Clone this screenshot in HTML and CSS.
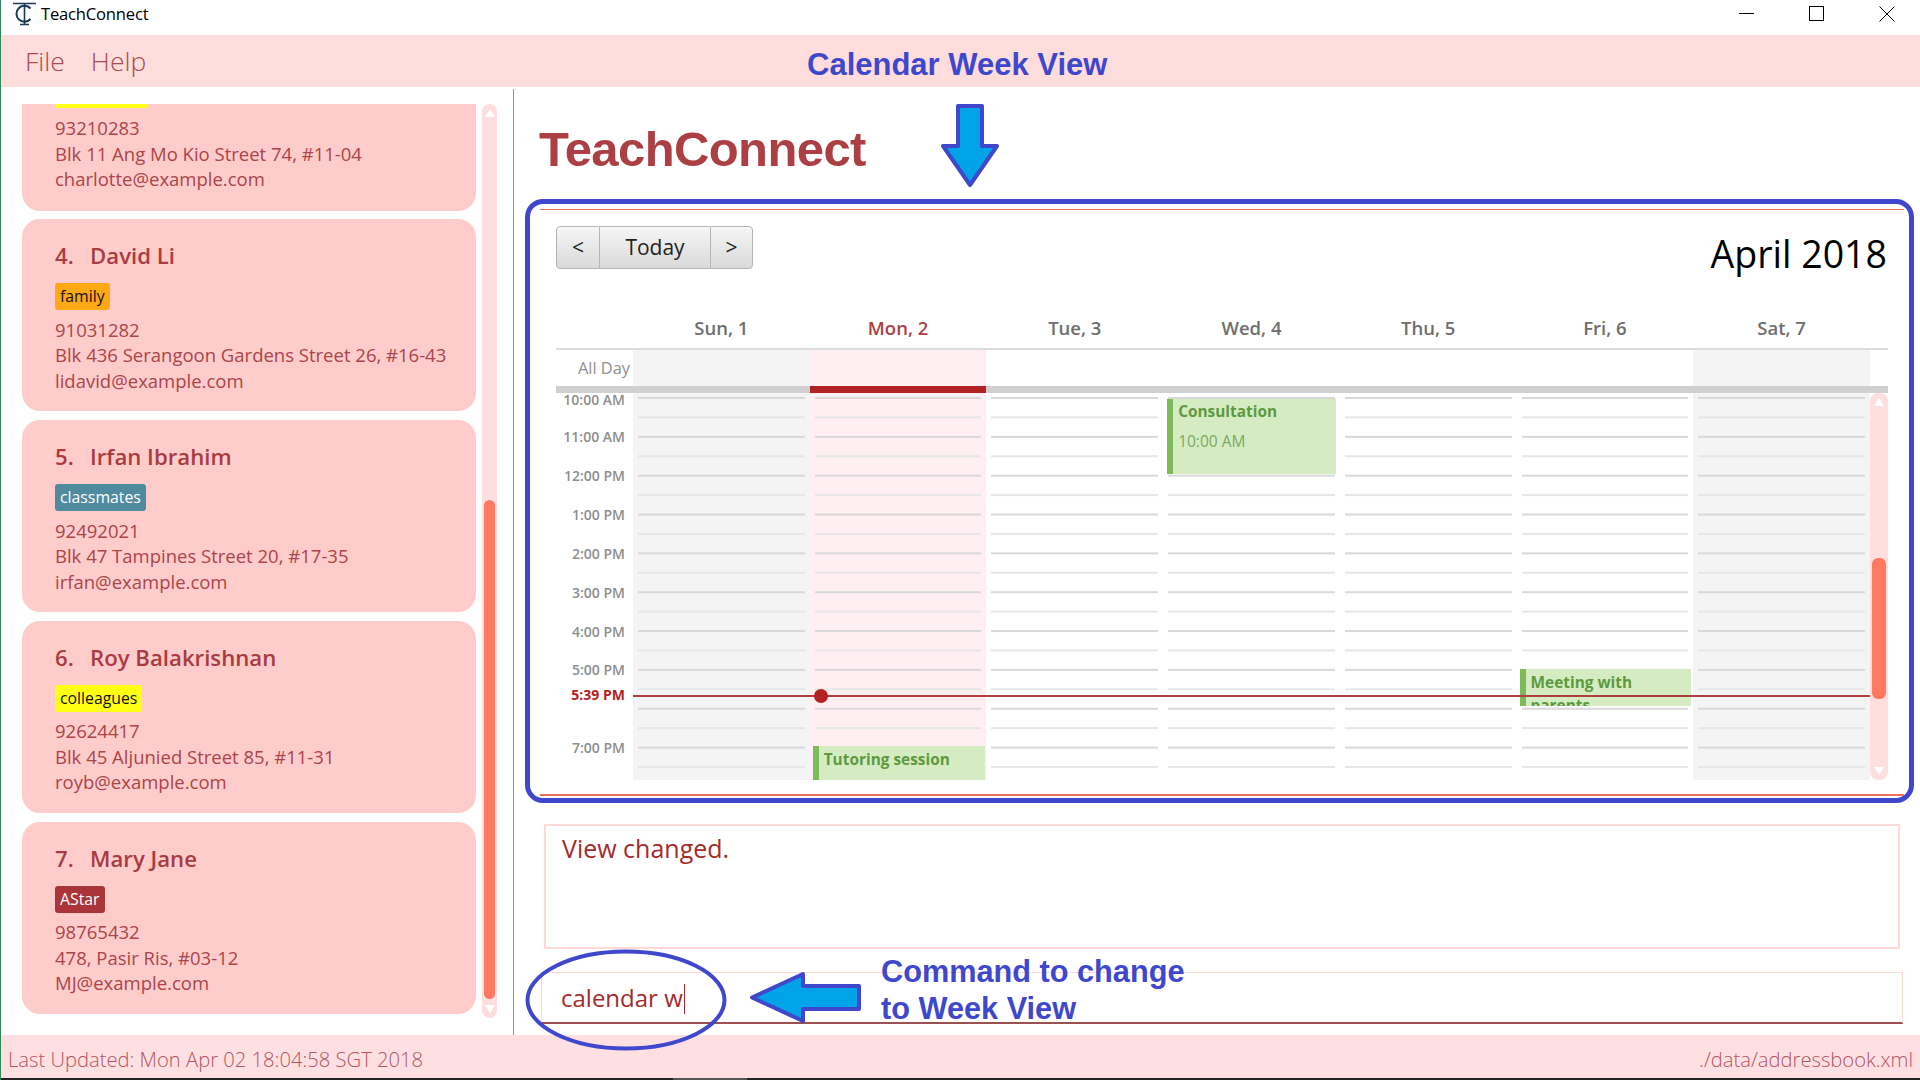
FILE: index.html
```html
<!DOCTYPE html>
<html lang="en">

<head>
    <meta charset="UTF-8">
    <title>TeachConnect</title>
    <link rel="stylesheet" href="styles.css">
</head>

<body>
    <div class="titlebar">
        <svg class="app-icon" viewBox="0 0 26 26" width="26" height="26">
            <path d="M1 2.5H24M12.5 2V23M8 23.5H17" fill="none" stroke="#1c3a55" stroke-width="1.6" />
            <path d="M18.5 7.5A8 8 0 1 0 18.5 18" fill="none" stroke="#1c3a55" stroke-width="2" />
        </svg>
        <span class="app-name">TeachConnect</span>
        <div class="win-buttons">
            <svg viewBox="0 0 16 16" width="16" height="16"><path d="M0 7.5H15" stroke="#000" fill="none" /></svg>
            <svg viewBox="0 0 16 16" width="16" height="16"><rect x="0.5" y="0.5" width="14" height="14" stroke="#000" fill="none" /></svg>
            <svg viewBox="0 0 16 16" width="16" height="16"><path d="M0.5 0.5L15.5 15.5M15.5 0.5L0.5 15.5" stroke="#000" fill="none" /></svg>
        </div>
    </div>

    <div class="menubar">
        <span>File</span>
        <span>Help</span>
    </div>

    <div class="main">
        <div class="sidebar">
            <div class="person-list">
                <!-- list is scrolled: only the bottom of this card shows -->
                <div class="card card-cut">
                    <div class="tag-stub"></div>
                    <div class="details">93210283<br>Blk 11 Ang Mo Kio Street 74, #11-04<br>charlotte@example.com</div>
                </div>
                <div class="card">
                    <div class="name"><span class="num">4.</span>David Li</div>
                    <span class="tag tag-orange">family</span>
                    <div class="details">91031282<br>Blk 436 Serangoon Gardens Street 26, #16-43<br>lidavid@example.com</div>
                </div>
                <div class="card">
                    <div class="name"><span class="num">5.</span>Irfan Ibrahim</div>
                    <span class="tag tag-teal">classmates</span>
                    <div class="details">92492021<br>Blk 47 Tampines Street 20, #17-35<br>irfan@example.com</div>
                </div>
                <div class="card">
                    <div class="name"><span class="num">6.</span>Roy Balakrishnan</div>
                    <span class="tag tag-yellow">colleagues</span>
                    <div class="details">92624417<br>Blk 45 Aljunied Street 85, #11-31<br>royb@example.com</div>
                </div>
                <div class="card">
                    <div class="name"><span class="num">7.</span>Mary Jane</div>
                    <span class="tag tag-red">AStar</span>
                    <div class="details">98765432<br>478, Pasir Ris, #03-12<br>MJ@example.com</div>
                </div>
            </div>
            <div class="scrollbar list-scrollbar">
                <div class="thumb"></div>
            </div>
        </div>

        <div class="content">
            <div class="brand">TeachConnect</div>

            <div class="calendar">
                <div class="toolbar">
                    <div class="nav-buttons">
                        <div class="nav-btn">&lt;</div>
                        <div class="nav-btn today-btn">Today</div>
                        <div class="nav-btn">&gt;</div>
                    </div>
                    <div class="month">April 2018</div>
                </div>

                <div class="week-row day-heads">
                    <div></div>
                    <div>Sun, 1</div>
                    <div class="is-today">Mon, 2</div>
                    <div>Tue, 3</div>
                    <div>Wed, 4</div>
                    <div>Thu, 5</div>
                    <div>Fri, 6</div>
                    <div>Sat, 7</div>
                </div>

                <div class="week-row all-day">
                    <div class="all-day-label">All Day</div>
                    <div class="weekend"></div>
                    <div class="today-col"></div>
                    <div></div>
                    <div></div>
                    <div></div>
                    <div></div>
                    <div class="weekend"></div>
                </div>

                <div class="week-row thick-bar">
                    <div></div>
                    <div></div>
                    <div class="today-bar"></div>
                </div>

                <div class="week-row hours">
                    <div class="times">
                        <div>10:00 AM</div>
                        <div>11:00 AM</div>
                        <div>12:00 PM</div>
                        <div>1:00 PM</div>
                        <div>2:00 PM</div>
                        <div>3:00 PM</div>
                        <div>4:00 PM</div>
                        <div>5:00 PM</div>
                        <div></div>
                        <div>7:00 PM</div>
                    </div>
                    <div class="day weekend"><div class="lines"></div></div>
                    <div class="day today-col">
                        <div class="lines"></div>
                        <div class="event tutoring"><b>Tutoring session</b></div>
                    </div>
                    <div class="day"><div class="lines"></div></div>
                    <div class="day">
                        <div class="lines"></div>
                        <div class="event consultation"><b>Consultation</b><span>10:00 AM</span></div>
                    </div>
                    <div class="day"><div class="lines"></div></div>
                    <div class="day">
                        <div class="lines"></div>
                        <div class="event meeting"><b>Meeting with parents</b></div>
                    </div>
                    <div class="day weekend"><div class="lines"></div></div>
                    <div class="scrollbar cal-scrollbar">
                        <div class="thumb"></div>
                    </div>
                    <div class="now-label">5:39 PM</div>
                    <div class="now-line"><div class="now-dot"></div></div>
                </div>
            </div>

            <div class="result-box">View changed.</div>
            <div class="command-box">calendar w<span class="caret"></span></div>
        </div>
    </div>

    <div class="statusbar">
        <span>Last Updated: Mon Apr 02 18:04:58 SGT 2018</span>
        <span>./data/addressbook.xml</span>
    </div>
    <div class="taskbar"><div class="taskbar-item"></div></div>

    <!-- annotations drawn on top of the screenshot -->
    <div class="note note-title">Calendar Week View</div>
    <div class="note note-command">Command to change<br>to Week View</div>
    <div class="note-frame"></div>
    <svg class="mark-down" viewBox="0 0 58 84" width="58" height="84">
        <path d="M17 2H41V42H56L29 81L2 42H17Z" fill="#00a2e8" stroke="#3f48cc" stroke-width="4" stroke-linejoin="round" />
    </svg>
    <svg class="mark-left" viewBox="0 0 112 51" width="112" height="51">
        <path d="M110 14H54V2L3 25.5L54 49V37H110Z" fill="#00a2e8" stroke="#3f48cc" stroke-width="4" stroke-linejoin="round" />
    </svg>
    <svg class="mark-ring" viewBox="0 0 202 102" width="202" height="102">
        <ellipse cx="101" cy="51" rx="98.5" ry="48.5" fill="none" stroke="#3f48cc" stroke-width="4" />
    </svg>
</body>

</html>
```

FILE: styles.css
```css
html, body {
    margin: 0;
    height: 100%;
    overflow: hidden;
}

body {
    position: relative;
    display: flex;
    flex-direction: column;
    width: 1920px;
    height: 1080px;
    box-sizing: border-box;
    border-left: 1px solid #2e8b57;
    background-color: #fff;
    font-family: "Open Sans", "Noto Sans", sans-serif;
    color: #a83c40;
}

/* window chrome */
.titlebar {
    display: flex;
    align-items: center;
    height: 35px;
    padding-bottom: 8px;
    box-sizing: border-box;
    flex: none;
    color: #000;
}

.app-icon {
    margin: 0 0 0 11px;
}

.app-name {
    margin-left: 3px;
    font-size: 16.6px;
    letter-spacing: -0.2px;
}

.win-buttons {
    display: flex;
    margin-left: auto;
    margin-right: 25px;
    gap: 54px;
}

.menubar {
    display: flex;
    align-items: center;
    gap: 26px;
    height: 52px;
    flex: none;
    padding-left: 24px;
    background-color: #ffdddd;
    font-size: 26.5px;
    font-weight: 300;
    color: #a94a4e;
}

.main {
    display: flex;
    flex: 1;
    min-height: 0;
}

/* person list */
.sidebar {
    display: flex;
    flex: none;
    box-sizing: border-box;
    width: 513px;
    margin-top: 2px;
    padding: 15px 0 17px 21px;
    border-right: 1px solid #e8735a;
}

.person-list {
    width: 454px;
    overflow: hidden;
}

.card {
    box-sizing: border-box;
    height: 192px;
    margin-bottom: 8.8px;
    padding: 24px 0 0 33px;
    border-radius: 18px;
    background-color: #ffcccc;
}

.card-cut {
    height: 106.6px;
    padding-top: 0;
    border-radius: 0 0 18px 18px;
}

.tag-stub {
    width: 93px;
    height: 4px;
    border-radius: 0 0 3px 3px;
    background-color: #ffff14;
}

.card-cut .details {
    margin-top: 7px;
}

.name {
    height: 26px;
    line-height: 26px;
    font-size: 22.2px;
    font-weight: 600;
    color: #a83c40;
    white-space: nowrap;
}

.num {
    display: inline-block;
    width: 35px;
}

.tag {
    display: inline-block;
    box-sizing: border-box;
    height: 27px;
    margin-top: 14px;
    padding: 0 5px;
    line-height: 26px;
    border-radius: 3px;
    font-size: 15.8px;
    vertical-align: top;
}

.tag-yellow { background-color: #ffff14; color: #111; }
.tag-orange { background-color: #ffa815; color: #111; }
.tag-teal { background-color: #508a9e; color: #fff; }
.tag-red { background-color: #a9353a; color: #fff; }

.details {
    margin-top: 6.5px;
    line-height: 25.5px;
    font-size: 18.5px;
    color: #ab4548;
    white-space: nowrap;
}

/* javafx style scrollbars */
.scrollbar {
    position: relative;
    border-radius: 8px;
    background-color: #ffdede;
}

.scrollbar::before, .scrollbar::after {
    content: "";
    position: absolute;
    left: 50%;
    margin-left: -5px;
    border-left: 5px solid transparent;
    border-right: 5px solid transparent;
}

.scrollbar::before {
    top: 5px;
    border-bottom: 8px solid #fff;
}

.scrollbar::after {
    bottom: 5px;
    border-top: 8px solid #fff;
}

.thumb {
    position: absolute;
    left: 2px;
    right: 2px;
    border-radius: 6px;
    background-color: #ff7a60;
}

.list-scrollbar {
    flex: none;
    width: 15px;
    margin-left: 6px;
}

.list-scrollbar .thumb {
    top: 396px;
    height: 499px;
}

.cal-scrollbar .thumb {
    top: 165px;
    height: 141px;
}

/* right side */
.content {
    display: flex;
    flex-direction: column;
    flex: 1;
    min-width: 0;
}

.brand {
    flex: none;
    height: 122px;
    padding-left: 25px;
    box-sizing: border-box;
    line-height: 125px;
    font-family: "Liberation Sans", sans-serif;
    font-weight: 700;
    font-size: 49px;
    letter-spacing: -0.6px;
    color: #ac3f44;
}

.calendar {
    flex: none;
    box-sizing: border-box;
    height: 587px;
    margin-left: 26px;
    margin-right: 16px;
    padding: 16px 16px 0 16px;
    border-top: 1px solid #e8735a;
    border-bottom: 2px solid #e8735a;
}

.toolbar {
    display: flex;
    justify-content: space-between;
    height: 43px;
}

.nav-buttons {
    display: flex;
}

.nav-btn {
    box-sizing: border-box;
    width: 44px;
    height: 43px;
    line-height: 41px;
    text-align: center;
    font-size: 21px;
    color: #222;
    border: 1px solid #b5b5b5;
    background: linear-gradient(#f6f6f6, #d9d9d9);
}

.nav-btn:first-child {
    border-radius: 4px 0 0 4px;
}

.nav-btn:last-child {
    width: 43px;
    border-radius: 0 4px 4px 0;
}

.today-btn {
    width: 110px;
    border-left: 0;
    border-right: 0;
}

.month {
    margin: 2px 1px 0 0;
    line-height: 52px;
    font-size: 37.5px;
    color: #000;
}

.week-row {
    display: grid;
    grid-template-columns: 77px repeat(7, 1fr) 18px;
}

.day-heads {
    box-sizing: border-box;
    height: 81px;
    padding-top: 45px;
    border-bottom: 2px solid #dcdcdc;
    line-height: 28px;
    text-align: center;
    font-size: 18.5px;
    font-weight: 600;
    color: #6e6e6e;
}

.day-heads .is-today {
    color: #ac3f44;
}

.all-day {
    height: 36px;
}

.all-day-label {
    padding-right: 3px;
    line-height: 36px;
    text-align: right;
    font-size: 16.4px;
    color: #909090;
}

.weekend {
    background-color: #f4f4f4;
}

.today-col {
    background-color: #ffeef2;
}

.thick-bar {
    height: 7px;
    background-color: #d0d0d0;
}

.today-bar {
    background-color: #b22222;
}

.hours {
    position: relative;
    height: 387px;
    overflow: hidden;
}

.times {
    margin-top: -12.5px;
    padding-right: 8px;
    text-align: right;
    font-size: 14px;
    font-weight: 600;
    color: #8e8e8e;
}

.times div {
    height: 38.85px;
    line-height: 36px;
}

.times div:first-child {
    height: 37.85px;
    padding-top: 1px;
}

.day {
    position: relative;
    padding: 0 5px;
}

.lines {
    height: 100%;
    background-image: linear-gradient(#d8d8d8 2px, transparent 2px), linear-gradient(#e6e6e6 2px, transparent 2px);
    background-size: 100% 38.85px;
    background-position: 0 4px, 0 23.4px;
}

.event {
    position: absolute;
    box-sizing: border-box;
    padding: 2px 16px 0 5px;
    overflow: hidden;
    border-left: 6px solid #7cbb58;
    background-color: #d5ecc2;
    color: #7ba863;
}

.event b {
    display: block;
    line-height: 23px;
    font-size: 15.4px;
    font-weight: 700;
    color: #5d9a3f;
}

.event span {
    display: block;
    margin-top: 5px;
    line-height: 26px;
    font-size: 15.5px;
}

.tutoring {
    left: 3px;
    top: 353px;
    width: 172px;
    height: 34px;
}

.consultation {
    left: 4px;
    top: 6px;
    width: 169px;
    height: 75px;
    padding-top: 1px;
}

.meeting {
    left: 3px;
    top: 276px;
    width: 171px;
    height: 37px;
}

.now-label {
    position: absolute;
    top: 292px;
    left: 0;
    width: 69px;
    line-height: 20px;
    text-align: right;
    font-size: 14px;
    font-weight: 700;
    color: #b22222;
}

.now-line {
    position: absolute;
    top: 302px;
    left: 77px;
    right: 18px;
    height: 2px;
    background-color: #b04040;
}

.now-dot {
    position: absolute;
    top: -6px;
    left: 181px;
    width: 14px;
    height: 14px;
    border-radius: 50%;
    background-color: #b22222;
}

.result-box {
    flex: none;
    box-sizing: border-box;
    height: 125px;
    margin: 28px 20px 0 30px;
    padding: 5px 16px;
    border: 2px solid #ffd8d8;
    line-height: 34px;
    font-size: 25px;
    color: #a52a2a;
}

.command-box {
    flex: none;
    box-sizing: border-box;
    height: 52px;
    margin: 23px 17px 0 27px;
    padding: 7px 19px 0;
    border: 1px solid #ffd8d8;
    border-bottom: 2px solid #9c5050;
    line-height: 36px;
    font-size: 24px;
    color: #a52a2a;
}

.caret {
    display: inline-block;
    width: 1px;
    height: 30px;
    margin-left: 1px;
    background-color: #a52a2a;
    vertical-align: -7px;
}

.statusbar {
    display: flex;
    flex: none;
    justify-content: space-between;
    align-items: center;
    box-sizing: border-box;
    height: 43px;
    padding: 4px 7px 0 7px;
    background-color: #ffe0e2;
    font-size: 20.2px;
    font-weight: 300;
    color: #b25560;
}

.taskbar {
    flex: none;
    height: 2px;
    background-color: #222;
}

.taskbar-item {
    width: 74px;
    height: 2px;
    margin-left: 672px;
    background-color: #555;
}

/* blue annotations */
.note {
    position: absolute;
    font-family: "Liberation Sans", sans-serif;
    font-weight: 700;
    color: #3f48cc;
}

.note-title {
    left: 806px;
    top: 47px;
    line-height: 36px;
    font-size: 31px;
}

.note-command {
    left: 880px;
    top: 954px;
    line-height: 36.5px;
    font-size: 30.7px;
}

.note-frame {
    position: absolute;
    left: 524px;
    top: 199px;
    width: 1389px;
    height: 604px;
    box-sizing: border-box;
    border: 5px solid #3f48cc;
    border-radius: 18px;
}

.mark-down {
    position: absolute;
    left: 940px;
    top: 104px;
}

.mark-left {
    position: absolute;
    left: 748px;
    top: 972px;
}

.mark-ring {
    position: absolute;
    left: 524px;
    top: 949px;
}
```
